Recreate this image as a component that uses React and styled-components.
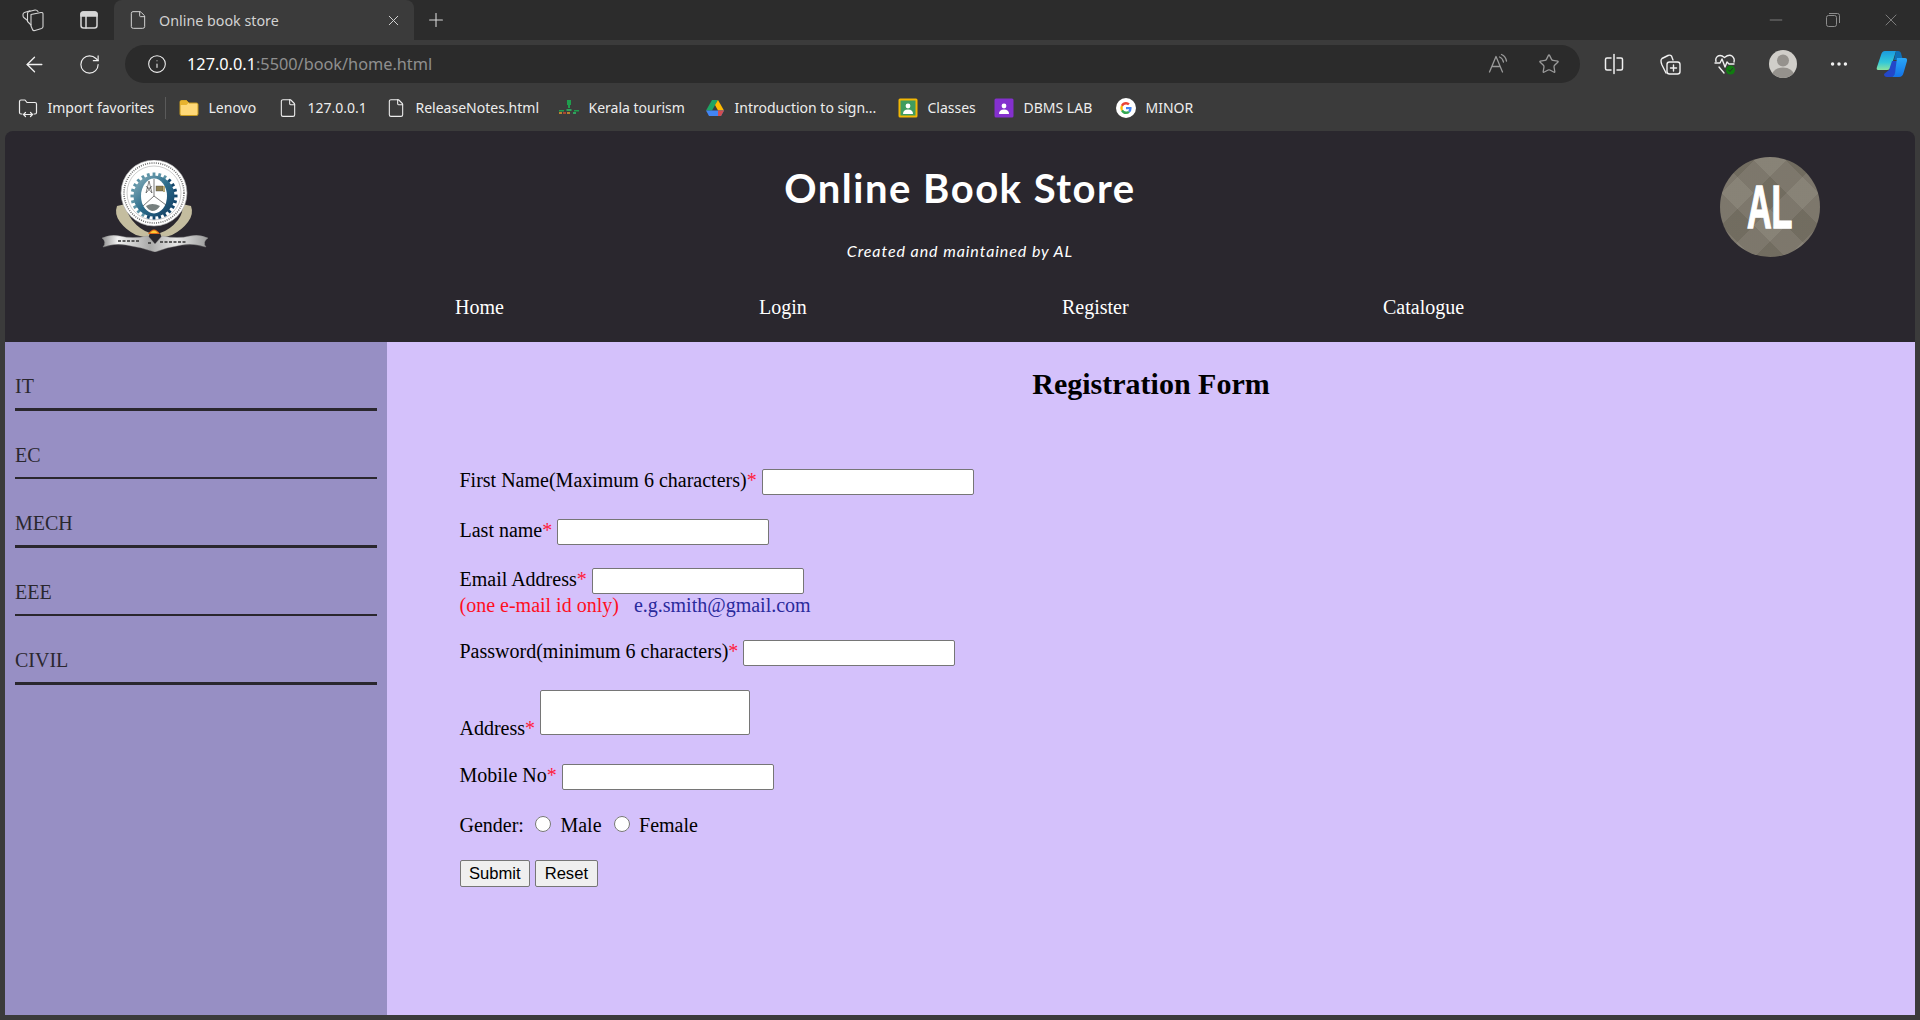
import React from 'react';
import styled, {createGlobalStyle} from 'styled-components';
import {ArrowLeft, RotateCw, Info, Star, Plus, X, Minus, File, MoreHorizontal} from 'lucide-react';

const GlobalStyle = createGlobalStyle`
    html, body {
        margin: 0;
        height: 100%;
        overflow: hidden;
        background: #3b3b3b;
    }
    * {
        box-sizing: border-box;
    }
`;

const Window = styled.div`
    width: 1920px;
    height: 1020px;
    display: flex;
    flex-direction: column;
    font-family: "Noto Sans", "Open Sans", sans-serif;
`;

const TabStrip = styled.div`
    height: 40px;
    flex: none;
    background: #2c2c2c;
    display: flex;
    align-items: center;
    color: #d6d6d6;
`;

const StripIcon = styled.div`
    width: ${props => props.$w}px;
    height: 40px;
    display: flex;
    align-items: center;
    justify-content: center;
    flex: none;
    color: ${props => props.$dim ? '#8d8d8d' : '#d6d6d6'};
`;

const Tab = styled.div`
    width: 300px;
    height: 40px;
    margin-left: 3px;
    flex: none;
    background: #3b3b3b;
    border-radius: 8px 8px 0 0;
    display: flex;
    align-items: center;
    padding: 0 12px 0 14px;
    font-size: 14.3px;
    color: #d2d2d2;
`;

const TabTitle = styled.span`
    margin-left: 11px;
    flex: 1;
`;

const Spacer = styled.div`
    flex: 1;
`;

const Toolbar = styled.div`
    height: 48px;
    flex: none;
    background: #3b3b3b;
    display: flex;
    align-items: center;
    color: #f0f0f0;
`;

const ToolIcon = styled.div`
    width: ${props => props.$w}px;
    flex: none;
    display: flex;
    justify-content: center;
    align-items: center;
    color: ${props => props.$dim ? '#9a9a9a' : '#f0f0f0'};
`;

const AddressBar = styled.div`
    width: 1455px;
    height: 38px;
    margin-left: 14px;
    flex: none;
    background: #2b2b2b;
    border-radius: 19px;
    display: flex;
    align-items: center;
    padding: 0 6px 0 22px;
`;

const Url = styled.div`
    margin-left: 20px;
    flex: 1;
    font-size: 16.3px;
    color: #8f8f8f;
`;

const UrlHost = styled.span`
    color: #ffffff;
`;

const BookmarksBar = styled.div`
    height: 43px;
    flex: none;
    background: #3b3b3b;
    display: flex;
    align-items: center;
    padding-left: 18px;
    padding-bottom: 4px;
    font-size: 14px;
    color: #ededed;
`;

const Bookmark = styled.div`
    width: ${props => props.$w}px;
    flex: none;
    display: flex;
    align-items: center;
    gap: 9.5px;
    white-space: nowrap;
`;

const BookmarkSep = styled.div`
    width: 1px;
    height: 22px;
    background: #5a5a5a;
    margin-left: -14px;
    margin-right: 13px;
`;

const Page = styled.div`
    flex: 1;
    margin: 0 5px 5px;
    border-radius: 8px 8px 0 0;
    overflow: hidden;
    display: flex;
    flex-direction: column;
    font-family: "Liberation Serif", "Times New Roman", serif;
    font-size: 20px;
`;

const Header = styled.header`
    height: 211px;
    flex: none;
    background: #2a272e;
    color: #ffffff;
    display: flex;
    flex-direction: column;
`;

const HeaderTop = styled.div`
    height: 152px;
    display: grid;
    grid-template-columns: 1fr auto 1fr;
`;

const LogoCell = styled.div`
    padding: 29px 0 0 97px;
`;

const AvatarCell = styled.div`
    padding: 26px 95px 0 0;
    display: flex;
    justify-content: flex-end;
`;

const Avatar = styled.div`
    width: 100px;
    height: 100px;
    border-radius: 50%;
    display: flex;
    align-items: center;
    justify-content: center;
    background-color: #7a7467;
    background-image:
        repeating-linear-gradient(45deg, rgba(255, 255, 255, 0.06) 0 23px, rgba(0, 0, 0, 0.03) 23px 46px),
        repeating-linear-gradient(-45deg, rgba(255, 255, 255, 0.05) 0 23px, rgba(0, 0, 0, 0.04) 23px 46px);
`;

const AvatarText = styled.span`
    font-family: "Liberation Sans", sans-serif;
    font-weight: 700;
    font-size: 61px;
    line-height: 61px;
    color: #ffffff;
    transform: scaleX(0.56);
    -webkit-text-stroke: 1.5px #ffffff;
`;

const Titles = styled.div`
    text-align: center;
    font-family: "Comic Sans MS", "Lato", sans-serif;
`;

const Title = styled.h1`
    margin: 32px 0 0;
    font-size: 40px;
    line-height: 50px;
    font-weight: 700;
    letter-spacing: 1.5px;
`;

const Subtitle = styled.div`
    margin-top: 28px;
    font-size: 16px;
    line-height: 20px;
    font-style: italic;
    letter-spacing: 0.93px;
`;

const Nav = styled.nav`
    display: grid;
    grid-template-columns: 304px 303px 321px auto;
    padding: 13px 0 0 450px;
    font-size: 20px;
    line-height: 23px;
`;

const Content = styled.div`
    flex: 1;
    display: flex;
    min-height: 0;
`;

const Sidebar = styled.aside`
    width: 382px;
    flex: none;
    background: #978fc4;
    color: #2a272e;
    padding: 33px 10px 0;
`;

const Category = styled.div`
    height: 68.5px;
    line-height: 23px;
`;

const Rule = styled.div`
    height: ${props => props.$thick ? 3 : 2}px;
    margin-top: 10px;
    background: #2a272e;
`;

const Main = styled.main`
    flex: 1;
    background: #d4c1fb;
    padding: 25px 0 0 72.5px;
    color: #000000;
`;

const Heading = styled.h2`
    margin: 0 0 0 -72.5px;
    text-align: center;
    font-size: 30px;
    line-height: 34px;
    font-weight: 700;
`;

const Form = styled.form`
    margin-top: ${props => props.$top}px;
`;

const Row = styled.div`
    margin-top: ${props => props.$gap}px;
    line-height: 23px;
    white-space: nowrap;
`;

const Required = styled.span`
    color: #ff1a3c;
`;

const Hint = styled.span`
    color: #ff0f1f;
`;

const Example = styled.span`
    color: #2a2a9c;
    margin-left: 15px;
`;

const TextInput = styled.input`
    width: 212px;
    height: 26px;
    margin-left: 5px;
    padding: 1px 2px;
    border: 1px solid #767676;
    border-radius: 2px;
    background: #ffffff;
    font-size: 16.6px;
`;

const AddressInput = styled.textarea`
    width: 210px;
    height: 45px;
    margin-left: 5px;
    padding: 2px;
    border: 1px solid #767676;
    border-radius: 2px;
    background: #ffffff;
    resize: none;
    display: inline-block;
    vertical-align: baseline;
`;

const Radio = styled.input`
    width: 16px;
    height: 16px;
    margin: 2px 4px 0 ${props => props.$left}px;
    accent-color: #767676;
`;

const Label = styled.span`
    margin-left: 5.5px;
`;

const Button = styled.button`
    height: 27px;
    margin-right: 5px;
    padding: 0 8.5px;
    border: 1px solid #767676;
    border-radius: 2px;
    background: #efefef;
    color: #000000;
    font-family: "Liberation Sans", Arial, sans-serif;
    font-size: 16.6px;
`;

const stroke = {fill: 'none', stroke: 'currentColor', strokeWidth: 1.3, strokeLinecap: 'round', strokeLinejoin: 'round'};

const WorkspacesIcon = () => (
    <svg width="24" height="24" viewBox="0 0 24 24" {...stroke} strokeWidth="1.1">
        <path d="M10 6.5 L20 4.5 Q22 4.3 22 6 V18.5 Q22 20 20.5 20.5 L14 22.5 Q12 23 11.5 21.5 L10 18 Z"/>
        <path d="M10 17 L6.5 13.5 V5.5 Q6.5 4 8 3.5 L14 2 Q16 1.8 17 3.5"/>
        <path d="M6.5 12.5 L2.8 9.5 Q2 8.8 2 7.5 V6.5 Q2 5 3.5 4.5 L9 2.8"/>
    </svg>
);

const VerticalTabsIcon = () => (
    <svg width="20" height="20" viewBox="0 0 20 20" {...stroke} strokeWidth="1.5">
        <rect x="2" y="2" width="16" height="16" rx="2.5"/>
        <path d="M2 4.5 Q2 2 4.5 2 H15.5 Q18 2 18 4.5 V6 H2 Z" fill="currentColor"/>
        <path d="M7 6 V18"/>
    </svg>
);

const ReadAloudIcon = () => (
    <svg width="22" height="22" viewBox="0 0 22 22" {...stroke}>
        <path d="M1.5 19 L8 3.5 L14.5 19 M4 13.5 H12"/>
        <path d="M11.5 4 Q14.5 5 15.5 9 M13.5 1.5 Q17.5 3 18.5 8"/>
    </svg>
);

const SplitIcon = () => (
    <svg width="20" height="22" viewBox="0 0 20 22" {...stroke} strokeWidth="1.5">
        <path d="M7 5 H3 Q1.5 5 1.5 6.5 V15.5 Q1.5 17 3 17 H7"/>
        <path d="M13 5 H17 Q18.5 5 18.5 6.5 V15.5 Q18.5 17 17 17 H13"/>
        <path d="M10 1.5 V20.5"/>
    </svg>
);

const CollectionsIcon = () => (
    <svg width="22" height="22" viewBox="0 0 22 22" {...stroke} strokeWidth="1.4">
        <path d="M7 20 L3 12 Q1 7 3 5.5 L9 2.5 Q11 1.5 12.5 3 L14 7"/>
        <rect x="8" y="9" width="13" height="12" rx="2.5"/>
        <path d="M14.5 12 V18 M11.5 15 H17.5"/>
    </svg>
);

const HealthIcon = () => (
    <svg width="22" height="22" viewBox="0 0 22 22" {...stroke} strokeWidth="1.4">
        <path d="M2 8.5 Q1 5 4 3 Q7 1.5 10.5 4.5 Q15 1 18 3 Q21 5.5 20 9"/>
        <path d="M1 10 H6 L8 6 L11 14 L13 9 L15 11 H20"/>
        <path d="M5 14 L10 20"/>
        <circle cx="16.5" cy="17" r="4.5" fill="#107c10" stroke="none"/>
        <path d="M14.5 17 L16 18.5 L18.5 15.5" stroke="#2c2c2c" strokeWidth="1"/>
    </svg>
);

const ProfileAvatar = () => (
    <svg width="28" height="28" viewBox="0 0 28 28">
        <defs>
            <clipPath id="profileClip"><circle cx="14" cy="14" r="14"/></clipPath>
        </defs>
        <circle cx="14" cy="14" r="14" fill="#d0cec9"/>
        <g clipPath="url(#profileClip)" fill="#95928d">
            <circle cx="14" cy="10.5" r="6"/>
            <ellipse cx="14" cy="25" rx="11" ry="7.5"/>
        </g>
    </svg>
);

const CopilotIcon = () => (
    <svg width="32" height="28" viewBox="0 0 32 28">
        <defs>
            <linearGradient id="copilotA" x1="0" y1="0" x2="0" y2="1">
                <stop offset="0" stopColor="#1a9be0"/>
                <stop offset="0.6" stopColor="#33c8d8"/>
                <stop offset="1" stopColor="#8be3a0"/>
            </linearGradient>
            <linearGradient id="copilotB" x1="0" y1="0" x2="0" y2="1">
                <stop offset="0" stopColor="#2aa6f5"/>
                <stop offset="1" stopColor="#1473e8"/>
            </linearGradient>
        </defs>
        <path d="M9 1 H20 L15 17 Q14 20 11 20 H2 Q0 20 1 17 L5 5 Q6 1 9 1 Z" fill="url(#copilotA)"/>
        <path d="M20 1 H22 Q25 1 25.5 5 L27 10 H18 Z" fill="#0f6fb5"/>
        <path d="M13 20 L16 11 H22 L19 24 Q18 27 15 27 H11 Q8 27 8 24 Z" fill="#2347c8"/>
        <path d="M21 8 H29 Q31.5 8 31 11 L27.5 23 Q26.5 27 23 27 H15 Q18 27 19 23 Z" fill="url(#copilotB)"/>
    </svg>
);

const ImportIcon = () => (
    <svg width="20" height="20" viewBox="0 0 20 20" {...stroke} strokeWidth="1.2">
        <path d="M4 16 H3 Q1.5 16 1.5 14.5 V3.5 Q1.5 2 3 2 H7 L9 4.5 H17 Q18.5 4.5 18.5 6 V14.5 Q18.5 16 17 16 H16"/>
        <path d="M6 16.5 H14 M7.5 14.5 L5.5 16.5 L7.5 18.5 M12.5 14.5 L14.5 16.5 L12.5 18.5"/>
    </svg>
);

const FolderIcon = () => (
    <svg width="20" height="20" viewBox="0 0 20 20">
        <path d="M1 4 Q1 2.5 2.5 2.5 H7.5 L10 5 H17.5 Q19 5 19 6.5 V16 Q19 17.5 17.5 17.5 H2.5 Q1 17.5 1 16 Z" fill="#ffd978" stroke="#c79a1e"/>
        <path d="M1 5 Q1 2.5 2.5 2.5 H7.5 L9.5 5 L7.5 7 H1 Z" fill="#e8b32e"/>
    </svg>
);

const KeralaIcon = () => (
    <svg width="20" height="20" viewBox="0 0 20 20">
        <rect x="8" y="2" width="4" height="5" fill="#1f9d4d"/>
        <rect x="9" y="7" width="2" height="3" fill="#1f9d4d"/>
        <rect x="0" y="12" width="5" height="1.5" fill="#1f9d4d"/>
        <rect x="7.5" y="11" width="5" height="2" fill="#2fa15c"/>
        <rect x="15" y="12" width="5" height="1.5" fill="#1f9d4d"/>
        <rect x="0" y="14" width="3" height="2" fill="#b9812e"/>
        <rect x="4" y="14" width="3" height="2" fill="#a8482f"/>
        <rect x="8" y="14" width="3" height="2" fill="#b9812e"/>
        <rect x="14" y="14" width="3" height="2" fill="#2fa15c"/>
    </svg>
);

const DriveIcon = () => (
    <svg width="20" height="20" viewBox="0 0 20 20">
        <path d="M7 2 H13 L7 12.5 H1 Z" fill="#1fa463"/>
        <path d="M13 2 L19 12.5 H13 L10 7 Z" fill="#ffba00"/>
        <path d="M7 12.5 H19 L16 18 H4 L1 12.5 Z" fill="#4285f4"/>
        <path d="M13 12.5 H19 L16 18 H13 Z" fill="#ea4335" opacity="0.85"/>
    </svg>
);

const ClassroomIcon = ({bg, edge}) => (
    <svg width="20" height="20" viewBox="0 0 20 20">
        <rect x="0.5" y="0.5" width="19" height="19" rx="1.5" fill={edge}/>
        <rect x="2.5" y="2.5" width="15" height="15" fill={bg}/>
        <circle cx="10" cy="8" r="2.4" fill="#ffffff"/>
        <path d="M5 16 Q5 11.5 10 11.5 Q15 11.5 15 16 Z" fill="#ffffff"/>
    </svg>
);

const GoogleIcon = () => (
    <svg width="20" height="20" viewBox="0 0 20 20">
        <circle cx="10" cy="10" r="10" fill="#ffffff"/>
        <path d="M15.6 10.2 Q15.6 9.6 15.5 9 H10 V11.2 H13.2 Q13 12.3 12 13 L13.8 14.4 Q15.6 12.8 15.6 10.2 Z" fill="#4285f4"/>
        <path d="M10 16 Q12.4 16 13.8 14.4 L12 13 Q11.2 13.6 10 13.6 Q7.7 13.6 6.9 11.5 L5 12.9 Q6.5 16 10 16 Z" fill="#34a853"/>
        <path d="M6.9 11.5 Q6.4 10 6.9 8.5 L5 7.1 Q3.6 10 5 12.9 Z" fill="#fbbc05"/>
        <path d="M10 6.4 Q11.2 6.4 12.1 7.2 L13.8 5.6 Q12.3 4 10 4 Q6.5 4 5 7.1 L6.9 8.5 Q7.7 6.4 10 6.4 Z" fill="#ea4335"/>
    </svg>
);

const teeth = Array.from({length: 24}, (_, i) => i * 15);

const CollegeLogo = () => (
    <svg width="106" height="92" viewBox="0 0 106 92">
        <defs>
            <linearGradient id="gearFill" x1="0" y1="0" x2="1" y2="1">
                <stop offset="0" stopColor="#8fb3bd"/>
                <stop offset="0.5" stopColor="#2c6d8c"/>
                <stop offset="1" stopColor="#123a5e"/>
            </linearGradient>
            <linearGradient id="ribbonFill" x1="0" y1="0" x2="1" y2="0">
                <stop offset="0" stopColor="#8f8f8f"/>
                <stop offset="0.15" stopColor="#f2f2f2"/>
                <stop offset="0.45" stopColor="#a9a9a9"/>
                <stop offset="0.7" stopColor="#e8e8e8"/>
                <stop offset="1" stopColor="#9a9a9a"/>
            </linearGradient>
        </defs>
        <path d="M15 46 Q12 54 18 62 Q24 70 34 75 L46 78 L48 73 Q38 70 30 60 Q24 52 24 44 Z" fill="#c4bd9f"/>
        <path d="M89 46 Q92 54 86 62 Q80 70 70 75 L60 78 L58 73 Q68 70 76 60 Q82 52 80 44 Z" fill="#c4bd9f"/>
        <circle cx="52" cy="33" r="33" fill="#ffffff" stroke="#a8a8a8" strokeWidth="0.6"/>
        <circle cx="52" cy="33" r="30" fill="none" stroke="#6f6f6f" strokeWidth="1.6" strokeDasharray="1 1.2"/>
        <circle cx="52" cy="33" r="27" fill="#ffffff" stroke="#9a9a9a" strokeWidth="0.5"/>
        <g>
            {teeth.map(a => (
                <rect key={a} x="50.6" y="12.5" width="2.8" height="4" transform={`rotate(${a} 52 36)`} fill={a > 30 && a < 210 ? '#14466b' : '#5d93a6'}/>
            ))}
        </g>
        <circle cx="52" cy="36" r="20.5" fill="url(#gearFill)"/>
        <ellipse cx="52" cy="36" rx="13" ry="17.5" fill="#ffffff"/>
        <path d="M52 36 L52 19 M52 36 L41 46 M52 36 L64 45" stroke="#555555" strokeWidth="0.8"/>
        <path d="M44 33 L47 21 L50 33 M45 28 H49 M44 33 L50 26 M50 33 L44 26" stroke="#333333" strokeWidth="0.6" fill="none"/>
        <rect x="54" y="26" width="7" height="5" fill="#8d7f4f" stroke="#444444" strokeWidth="0.4"/>
        <rect x="61" y="26" width="2" height="6" fill="#b9ad7c"/>
        <path d="M44 46 Q50 42 58 46 Q55 51 50 51 Q46 50 44 46 Z" fill="#77807f"/>
        <path d="M46 74 Q52 65 58 74 Z" fill="#e36b1d"/>
        <path d="M48 73 Q52 68 56 73 Z" fill="#ffcc33"/>
        <path d="M0 78 Q8 74 18 76 Q30 79 46 76 L53 84 L60 76 Q76 79 88 76 Q98 74 106 78 Q100 82 104 87 Q92 83 80 85 Q66 87 53 92 Q38 87 24 85 Q12 83 1 87 Q5 82 0 78 Z" fill="url(#ribbonFill)" stroke="#8f8f8f" strokeWidth="0.4"/>
        <path d="M16 81 H38 M46 83 H50 M58 82 H84" stroke="#333333" strokeWidth="1.6" strokeDasharray="3 1.5"/>
    </svg>
);

const bookmarks = [
    {label: 'Lenovo', w: 99, icon: <FolderIcon/>},
    {label: '127.0.0.1', w: 108, icon: <File size={20} strokeWidth={1.3}/>},
    {label: 'ReleaseNotes.html', w: 173, icon: <File size={20} strokeWidth={1.3}/>},
    {label: 'Kerala tourism', w: 146, icon: <KeralaIcon/>},
    {label: 'Introduction to sign...', w: 193, icon: <DriveIcon/>},
    {label: 'Classes', w: 96, icon: <ClassroomIcon bg="#3f9c5f" edge="#f2b705"/>},
    {label: 'DBMS LAB', w: 122, icon: <ClassroomIcon bg="#8430ce" edge="#8430ce"/>},
    {label: 'MINOR', w: 90, icon: <GoogleIcon/>},
];

const navLinks = ['Home', 'Login', 'Register', 'Catalogue'];
const categories = [['IT', true], ['EC', false], ['MECH', true], ['EEE', false], ['CIVIL', true]];

const App = () => {
    return (
        <Window>
            <GlobalStyle/>
            <TabStrip>
                <StripIcon $w={66}><WorkspacesIcon/></StripIcon>
                <StripIcon $w={45}><VerticalTabsIcon/></StripIcon>
                <Tab>
                    <File size={20} strokeWidth={1.2}/>
                    <TabTitle>Online book store</TabTitle>
                    <X size={17} strokeWidth={1.4}/>
                </Tab>
                <StripIcon $w={44}><Plus size={22} strokeWidth={1.2}/></StripIcon>
                <Spacer/>
                <StripIcon $w={56} $dim><Minus size={20} strokeWidth={1}/></StripIcon>
                <StripIcon $w={58} $dim>
                    <svg width="16" height="16" viewBox="0 0 16 16" fill="none" stroke="currentColor">
                        <rect x="1.5" y="3.5" width="10" height="11" rx="2"/>
                        <path d="M4 1.5 H12.5 Q14.5 1.5 14.5 3.5 V11"/>
                    </svg>
                </StripIcon>
                <StripIcon $w={58} $dim><X size={20} strokeWidth={1}/></StripIcon>
            </TabStrip>
            <Toolbar>
                <ToolIcon $w={68}><ArrowLeft size={25} strokeWidth={1.3}/></ToolIcon>
                <ToolIcon $w={43}><RotateCw size={23} strokeWidth={1.2}/></ToolIcon>
                <AddressBar>
                    <Info size={20} strokeWidth={1.3} color="#f0f0f0"/>
                    <Url><UrlHost>127.0.0.1</UrlHost>:5500/book/home.html</Url>
                    <ToolIcon $w={50} $dim><ReadAloudIcon/></ToolIcon>
                    <ToolIcon $w={50} $dim><Star size={22} strokeWidth={1.4}/></ToolIcon>
                </AddressBar>
                <ToolIcon $w={68}><SplitIcon/></ToolIcon>
                <ToolIcon $w={44}><CollectionsIcon/></ToolIcon>
                <ToolIcon $w={66}><HealthIcon/></ToolIcon>
                <ToolIcon $w={50}><ProfileAvatar/></ToolIcon>
                <ToolIcon $w={62}><MoreHorizontal size={22} strokeWidth={1.8}/></ToolIcon>
                <ToolIcon $w={44}><CopilotIcon/></ToolIcon>
            </Toolbar>
            <BookmarksBar>
                <Bookmark $w={161}><ImportIcon/>Import favorites</Bookmark>
                <BookmarkSep/>
                {bookmarks.map(b => (
                    <Bookmark key={b.label} $w={b.w}>{b.icon}{b.label}</Bookmark>
                ))}
            </BookmarksBar>
            <Page>
                <Header>
                    <HeaderTop>
                        <LogoCell><CollegeLogo/></LogoCell>
                        <Titles>
                            <Title>Online Book Store</Title>
                            <Subtitle>Created and maintained by AL</Subtitle>
                        </Titles>
                        <AvatarCell>
                            <Avatar><AvatarText>AL</AvatarText></Avatar>
                        </AvatarCell>
                    </HeaderTop>
                    <Nav>
                        {navLinks.map(link => <div key={link}>{link}</div>)}
                    </Nav>
                </Header>
                <Content>
                    <Sidebar>
                        {categories.map(([name, thick]) => (
                            <Category key={name}>
                                {name}
                                <Rule $thick={thick}/>
                            </Category>
                        ))}
                    </Sidebar>
                    <Main>
                        <Heading>Registration Form</Heading>
                        <Form $top={68}>
                            <Row $gap={0}>First Name(Maximum 6 characters)<Required>*</Required><TextInput/></Row>
                            <Row $gap={24}>Last name<Required>*</Required><TextInput/></Row>
                            <Row $gap={23}>Email Address<Required>*</Required><TextInput/></Row>
                            <Row $gap={0}><Hint>(one e-mail id only)</Hint><Example>e.g.smith@gmail.com</Example></Row>
                            <Row $gap={22.5}>Password(minimum 6 characters)<Required>*</Required><TextInput/></Row>
                            <Row $gap={24.5}>Address<Required>*</Required><AddressInput/></Row>
                            <Row $gap={24}>Mobile No<Required>*</Required><TextInput/></Row>
                            <Row $gap={24}>
                                Gender:
                                <Radio type="radio" name="gender" $left={11}/><Label>Male</Label>
                                <Radio type="radio" name="gender" $left={12}/><Label>Female</Label>
                            </Row>
                            <Row $gap={23}>
                                <Button type="button">Submit</Button>
                                <Button type="button">Reset</Button>
                            </Row>
                        </Form>
                    </Main>
                </Content>
            </Page>
        </Window>
    );
};

export default App;
